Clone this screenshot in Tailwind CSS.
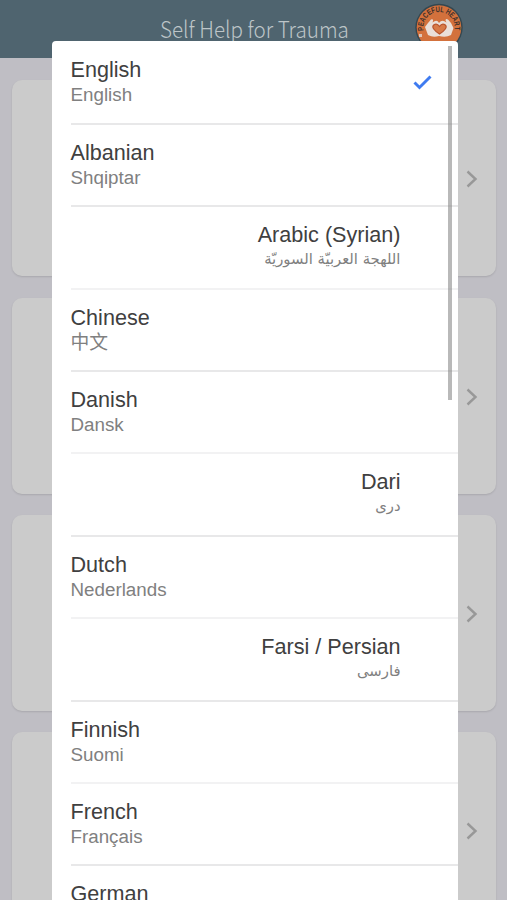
<!DOCTYPE html>
<html lang="en">
<head>
<meta charset="utf-8">
<title>Self Help for Trauma</title>
<script src="https://cdn.jsdelivr.net/npm/@tailwindcss/browser@4"></script>
</head>
<body class="relative h-[900px] w-[507px] overflow-hidden bg-[#bfbec4] font-['Liberation_Sans','Noto_Sans_CJK_SC',sans-serif]">
<header class="flex h-[58px] items-center bg-[#4f646f] pl-40">
  <h1 class="w-[255px] shrink-0 origin-left scale-x-[0.905] whitespace-nowrap font-['Noto_Sans_CJK_SC',sans-serif] text-[22.8px] font-light leading-[58px] text-[#bdc5c8]">Self Help for Trauma</h1>
  <svg class="mt-[3px] h-[50px] w-[50px] shrink-0 self-start" viewBox="0 0 50 50">
    <circle cx="24" cy="24.5" r="23.7" fill="#344750"/>
    <circle cx="24" cy="24.5" r="22.3" fill="#d3713c"/>
    <path id="ring" d="M9.400 30.500 A15.700 15.700 0 1 1 38.600 30.500" fill="none"/>
    <text font-family="Liberation Sans" font-size="8" font-weight="700" fill="#3d302b"><textPath href="#ring" startOffset="3" textLength="54" lengthAdjust="spacingAndGlyphs">PEACEFUL HEART</textPath></text>
    <path d="M10 24 L13 20 L16 16.500 Q18.500 15.500 18 18 L17.500 19.500 Q22 16 24 20 Q27 16 31.500 19.500 L30.500 17.500 Q30.500 15 33 16.500 L36 20 L38.500 25 L36 32 Q31 35 24 33 Q18 35 13 32 Z" fill="#eadfd8"/>
    <path d="M24.500 31 Q15.500 25 18.700 22 Q22 19.800 24.500 23.500 Q27 19.800 30.300 22 Q33.500 25 24.500 31Z" fill="#d87a47" stroke="#b9552d" stroke-width="1.200"/>
    <path d="M4 31h3v3H4z" fill="#dec5b8"/>
  </svg>
</header>
<main id="cards" class="flex flex-col gap-[21.4px] px-[11.500px] pt-[22.300px]"></main>
<section class="absolute left-[52px] top-[40.500px] h-[880px] w-[405.500px] overflow-hidden rounded-[4px] bg-white">
  <ul id="languages" class="pl-[18.500px] pt-[2px]"></ul>
  <div class="absolute left-[396px] top-[5px] h-[354px] w-[4px] bg-[#7f7f7f]/55"></div>
</section>
<script>
const cards = document.getElementById('cards');
for (let i = 0; i < 4; i++) {
  cards.insertAdjacentHTML('beforeend', `<article class="flex h-[196px] shrink-0 items-center justify-end rounded-[10px] bg-[#cbcbcb] pr-[16.500px] pt-[2px] shadow-[0_1px_2px_rgba(0,0,0,0.12)]"><svg class="h-[18px] w-[14px]" viewBox="0 0 14 18"><path d="M2.500 1.500 L10.500 9 L2.500 16.500" fill="none" stroke="#989898" stroke-width="2.400"/></svg></article>`);
}
const languages = [
  ['English', 'English'], ['Albanian', 'Shqiptar'], ['Arabic (Syrian)', 'اللهجة العربيّة السوريّة', true],
  ['Chinese', '中文'], ['Danish', 'Dansk'], ['Dari', 'دری', true], ['Dutch', 'Nederlands'],
  ['Farsi / Persian', 'فارسی', true], ['Finnish', 'Suomi'], ['French', 'Français'], ['German', '']
];
const list = document.getElementById('languages');
languages.forEach(([name, native, rtl], i) => {
  const check = i === 0 ? '<svg class="mb-[1px] h-[18px] w-[20px]" viewBox="0 0 20 18"><path d="M1.500 9.500 L6.500 14.500 L17.500 3.500" fill="none" stroke="#3f7bf0" stroke-width="2.900"/></svg>' : '';
  const line = i === 2 || i === 4 || i === 6 || i === 8 ? 'border-[#f2f2f3]' : 'border-[#e8e8e9]';
  list.insertAdjacentHTML('beforeend', `<li class="flex h-[82.400px] items-center border-b-2 ${line} pr-[24.500px]">
    <div class="min-w-0 flex-1 ${rtl ? 'pr-[32.500px] text-right' : ''}">
      <div class="h-[26px] text-[21.600px] leading-[25.500px] text-[#404040]">${name}</div>
      <div class="h-[24.500px] whitespace-nowrap ${rtl ? "font-['DejaVu_Sans',sans-serif] text-[14.800px] leading-[22.500px]" : 'text-[18.800px] leading-[24px]'} text-[#808080]" ${rtl ? 'dir="rtl" lang="ar"' : ''}><span class="inline-block">${native}</span></div>
    </div>${check}</li>`);
});
</script>
</body>
</html>
